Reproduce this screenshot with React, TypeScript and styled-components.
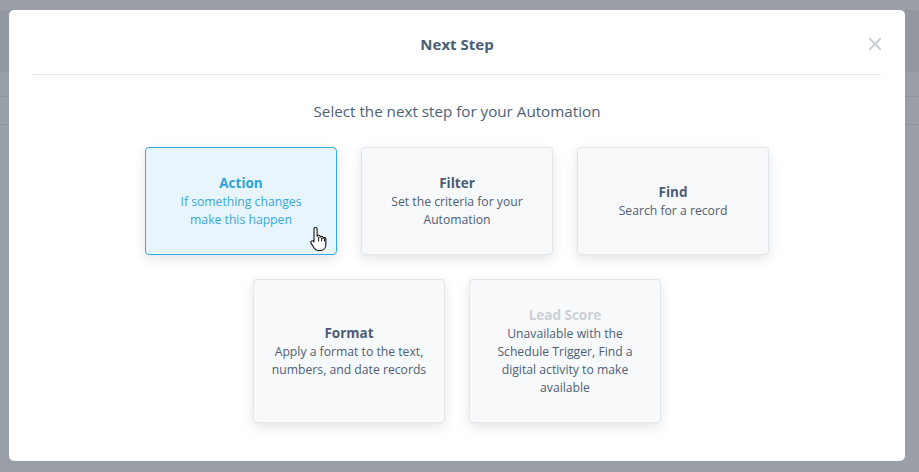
import React from "react";
import styled, { createGlobalStyle } from "styled-components";

const Global = createGlobalStyle`
  html, body { margin: 0; padding: 0; }
  body {
    width: 919px;
    height: 472px;
    overflow: hidden;
    font-family: "Open Sans", "Noto Sans", sans-serif;
    background: #9a9ea6;
  }
  * { box-sizing: border-box; }
`;

const Page = styled.div`
  position: relative;
  width: 919px;
  height: 472px;
  background: #9a9ea6;
  padding: 10px 14px 11px 9px;
  display: flex;
`;

const Backdrop = styled.div`
  position: absolute;
  inset: 0;
  display: flex;
  flex-direction: column;
`;

const BackTop = styled.div`
  height: 10px;
  background: #9a9ea6;
`;

const BackBand = styled.div`
  height: 62px;
  background: #9297a0;
`;

const BackRow = styled.div<{ $h: number }>`
  height: ${(p) => p.$h}px;
  border-bottom: 1px solid #8f939b;
`;

const Modal = styled.div`
  position: relative;
  flex: 1;
  background: #ffffff;
  border-radius: 5px;
  display: flex;
  flex-direction: column;
`;

const Header = styled.div`
  position: relative;
  margin: 0 24px;
  height: 65px;
  padding-top: 3px;
  border-bottom: 1px solid #e6e8eb;
  display: flex;
  align-items: center;
  justify-content: center;
`;

const Title = styled.h2`
  margin: 0;
  font-size: 15px;
  font-weight: 700;
  color: #4a5d77;
`;

const Close = styled.button`
  position: absolute;
  right: -1px;
  top: 27px;
  width: 14px;
  height: 14px;
  padding: 0;
  border: 0;
  background: transparent;
  display: flex;
  align-items: center;
  justify-content: center;
`;

const Body = styled.div`
  display: flex;
  flex-direction: column;
  align-items: center;
  padding-top: 25px;
`;

const Subtitle = styled.p`
  margin: 0 0 25px;
  font-size: 15.2px;
  line-height: 22px;
  color: #4e5f75;
`;

const Grid = styled.div`
  display: flex;
  flex-wrap: wrap;
  justify-content: center;
  gap: 24px;
  width: 624px;
`;

const Card = styled.div<{ $active?: boolean }>`
  position: relative;
  width: 192px;
  padding: 25px 12px 25px;
  border-radius: 4px;
  border: 1px solid ${(p) => (p.$active ? "#3aa9df" : "#e2e5e9")};
  background: ${(p) => (p.$active ? "#e8f5fc" : "#f8f9fb")};
  box-shadow: 0 4px 12px rgba(30, 40, 60, 0.12);
  display: flex;
  flex-direction: column;
  align-items: center;
  justify-content: center;
  text-align: center;
`;

const CardTitle = styled.div<{ $tone: "normal" | "active" | "disabled" }>`
  font-size: 13.5px;
  font-weight: 700;
  line-height: 20px;
  color: ${(p) =>
    p.$tone === "active" ? "#2ea3da" : p.$tone === "disabled" ? "#ccd0d6" : "#4a5d77"};
`;

const CardText = styled.div<{ $active?: boolean }>`
  font-size: 12.2px;
  line-height: 18px;
  color: ${(p) => (p.$active ? "#36a8dc" : "#4e5f75")};
`;

const Line = styled.span`
  display: block;
  white-space: nowrap;
`;

const Pointer = styled.svg`
  position: absolute;
  left: 164px;
  top: 78px;
`;

const cards = [
  { title: "Action", lines: ["If something changes", "make this happen"], tone: "active" as const },
  { title: "Filter", lines: ["Set the criteria for your", "Automation"], tone: "normal" as const },
  { title: "Find", lines: ["Search for a record"], tone: "normal" as const },
  {
    title: "Format",
    lines: ["Apply a format to the text,", "numbers, and date records"],
    tone: "normal" as const,
  },
  {
    title: "Lead Score",
    lines: ["Unavailable with the", "Schedule Trigger, Find a", "digital activity to make", "available"],
    tone: "disabled" as const,
  },
];

export default function App() {
  return (
    <>
      <Global />
      <Page>
        <Backdrop>
          <BackTop />
          <BackBand />
          <BackRow $h={25} />
          <BackRow $h={28} />
        </Backdrop>
        <Modal>
          <Header>
            <Title>Next Step</Title>
            <Close aria-label="Close">
              <svg width="12" height="12" viewBox="0 0 12 12">
                <path d="M1 1 L11 11 M11 1 L1 11" stroke="#c9ced6" strokeWidth="2" strokeLinecap="round" />
              </svg>
            </Close>
          </Header>
          <Body>
            <Subtitle>Select the next step for your Automation</Subtitle>
            <Grid>
              {cards.map((c) => (
                <Card key={c.title} $active={c.tone === "active"}>
                  <CardTitle $tone={c.tone}>{c.title}</CardTitle>
                  <CardText $active={c.tone === "active"}>
                    {c.lines.map((l) => (
                      <Line key={l}>{l}</Line>
                    ))}
                  </CardText>
                  {c.tone === "active" && (
                    <Pointer width="18" height="25" viewBox="0 0 18 25">
                      <path
                        d="M5.5 1.5c1 0 1.6.7 1.6 1.6v7.2c.3-.7.9-1 1.5-1 .9 0 1.5.6 1.5 1.5v.4c.3-.6.8-.9 1.4-.9.9 0 1.5.6 1.5 1.5v.6c.3-.5.8-.8 1.4-.8.9 0 1.5.7 1.5 1.6v5.2c0 3.6-2.5 6.1-6 6.1H8.6c-2 0-3.2-.8-4.3-2.2L1.2 17.4c-.6-.8-.4-1.8.3-2.3.7-.5 1.6-.4 2.2.3l.3.4V3.1c0-.9.6-1.6 1.5-1.6z"
                        fill="#fff"
                        stroke="#111"
                        strokeWidth="1.1"
                        strokeLinejoin="round"
                      />
                      <path d="M8.6 11v4.5M11.6 11.8v3.7M14.5 12.6v2.9" stroke="#111" strokeWidth="1" />
                    </Pointer>
                  )}
                </Card>
              ))}
            </Grid>
          </Body>
        </Modal>
      </Page>
    </>
  );
}
